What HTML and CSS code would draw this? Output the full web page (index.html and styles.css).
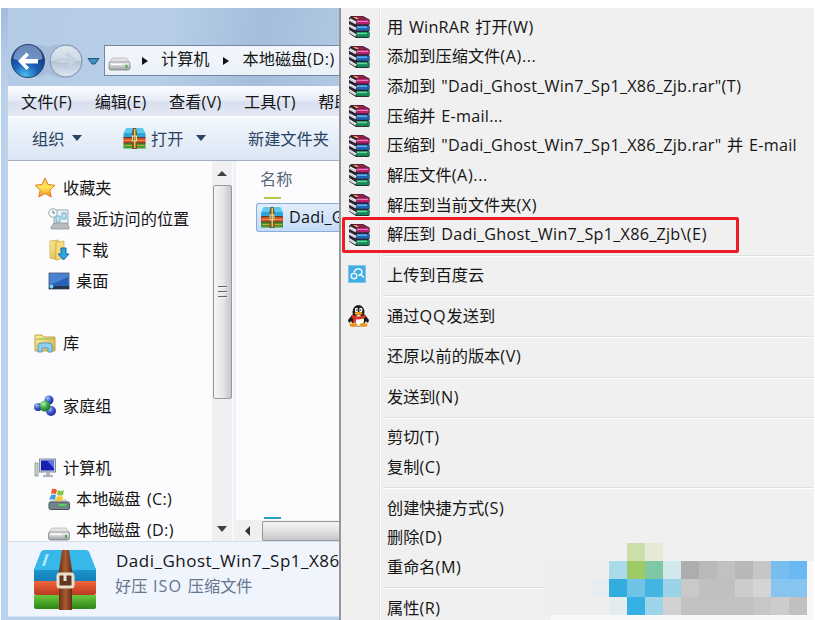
FILE: index.html
```html
<!DOCTYPE html>
<html lang="zh-CN">
<head>
    <meta charset="UTF-8">
    <meta name="viewport" content="width=device-width, initial-scale=1.0">
    <title>本地磁盘(D:)</title>
    <link rel="stylesheet" href="styles.css">
</head>
<body>
    <svg class="defs" width="0" height="0">
        <defs>
            <linearGradient id="blue" x1="0" y1="0" x2="0" y2="1">
                <stop offset="0" stop-color="#35bdec"/><stop offset="1" stop-color="#127db8"/>
            </linearGradient>
            <linearGradient id="red" x1="0" y1="0" x2="0" y2="1">
                <stop offset="0" stop-color="#f2653c"/><stop offset="1" stop-color="#b83a20"/>
            </linearGradient>
            <linearGradient id="green" x1="0" y1="0" x2="0" y2="1">
                <stop offset="0" stop-color="#6cc83c"/><stop offset="1" stop-color="#2d8517"/>
            </linearGradient>
            <linearGradient id="belt">
                <stop offset="0" stop-color="#703018"/><stop offset=".5" stop-color="#a85c30"/><stop offset="1" stop-color="#652b17"/>
            </linearGradient>
            <linearGradient id="gold" x1="0" y1="0" x2="1" y2="1">
                <stop offset="0" stop-color="#fff2a4"/><stop offset="1" stop-color="#d9ae3c"/>
            </linearGradient>
            <linearGradient id="metal" x1="0" y1="0" x2="0" y2="1">
                <stop offset="0" stop-color="#f8f8f8"/><stop offset="1" stop-color="#9a9fa1"/>
            </linearGradient>
            <linearGradient id="star" x1="0" y1="0" x2="0" y2="1">
                <stop offset="0" stop-color="#ffcb4b"/><stop offset=".5" stop-color="#ffe657"/><stop offset="1" stop-color="#f58b1f"/>
            </linearGradient>
            <radialGradient id="orb" cx=".4" cy=".95" r=".8">
                <stop offset="0" stop-color="#4fc0f5"/><stop offset=".5" stop-color="#1b5fb8"/><stop offset="1" stop-color="#16377e"/>
            </radialGradient>
            <linearGradient id="orbOff" x1="0" y1="0" x2="0" y2="1">
                <stop offset="0" stop-color="#dfe8f2"/><stop offset=".48" stop-color="#ccd8e5"/><stop offset=".5" stop-color="#b3c2d3"/><stop offset="1" stop-color="#dce7f2"/>
            </linearGradient>
            <radialGradient id="ballBlue" cx=".35" cy=".3" r=".8">
                <stop offset="0" stop-color="#aac4ff"/><stop offset=".5" stop-color="#3a55cc"/><stop offset="1" stop-color="#14238a"/>
            </radialGradient>
            <radialGradient id="ballGreen" cx=".35" cy=".3" r=".8">
                <stop offset="0" stop-color="#b4f0b0"/><stop offset=".5" stop-color="#37a548"/><stop offset="1" stop-color="#126a26"/>
            </radialGradient>
        </defs>
        <symbol id="rar" viewBox="0 0 22 22">
            <path d="M3 0h12l6.500 3.500v5L20.500 9l1 1v5l-1 .7 1 1V21l-1 1H8L1 17.500V16l1-1-1-2v-2l1-1.500-1-2V2z" fill="#2a2030"/>
            <path d="M3.500.5h11l6 3.200H9z" fill="#93204e"/>
            <path d="M5 1h3.500l2.500 1.900H8z" fill="#e3a545"/>
            <path d="M8.500 4H21.500v4.300H8.500z" fill="#b8206f"/>
            <path d="M9 4.800h11v1.200H9z" fill="#e47cb6"/>
            <path d="M8.500 9.800H21.500v4.900H8.500z" fill="#1d65b0"/>
            <path d="M9 10.500h10v1.400H9z" fill="#6bb7ea"/>
            <path d="M8.500 16H21.500v5.200H8.500z" fill="#128a56"/>
            <path d="M9 16.700h10v1.500H9z" fill="#6ad29e"/>
            <path d="M1.500 3.500L8 7M1.500 9.700L8 13.200M1.500 15.700L8 19.500" stroke="#f3f4f6" stroke-width="2.600"/>
            <path d="M1.500 3.700L8 7.300M1.500 9.900L8 13.500M1.500 15.900L8 19.800" stroke="#8b8f98" stroke-width=".5"/>
        </symbol>
        <symbol id="haozip" viewBox="0 0 64 60">
            <path d="M8 2q1-2 4-2h40q3 0 4 2l7 18v11H1V20z" fill="url(#blue)"/>
            <path d="M8 2q1-2 4-2h40q3 0 4 2l7 18H1z" fill="#36b9ea"/>
            <path d="M1 31h62v12q0 2-2 2H3q-2 0-2-2z" fill="url(#red)"/>
            <path d="M1 45h62v12q0 2-2 2H3q-2 0-2-2z" fill="url(#green)"/>
            <path d="M13 4h3l-4 12H9z" fill="#a6e6fa"/>
            <path d="M29 0h7l3 20v40H26V20z" fill="url(#belt)"/>
            <rect x="25" y="24" width="15" height="13" rx="2" fill="#60361f" stroke="#e9dfce" stroke-width="3"/>
            <path d="M32 24v7" stroke="#e9dfce" stroke-width="3"/>
        </symbol>
        <symbol id="zip" viewBox="0 0 22 21">
            <path d="M3 0h16l3 6v4H0V6z" fill="#2ca6dc"/>
            <path d="M3 0h16l3 5H0z" fill="#5cc9ee"/>
            <path d="M0 9h22v6H0z" fill="#d4512d"/>
            <path d="M0 15h22v5.500H0z" fill="#3f9c2c"/>
            <path d="M0 9.500h22M0 15h22" stroke="#5d3a20"/>
            <path d="M1 12.500h20M1 17.500h20" stroke="#f1a04d" stroke-width=".8"/>
            <path d="M9.500 0h3l1 5v16h-5V5z" fill="#7b5526"/>
            <path d="M10.500 1h1.500v19h-1.500z" fill="#e4c65b"/>
            <rect x="9" y="8" width="4" height="5" fill="none" stroke="#f0e3a8"/>
        </symbol>
        <symbol id="drive" viewBox="0 0 22 14">
            <path d="M4 1h14l3.500 5H.5z" fill="#e4e4e4" stroke="#b4b4b4" stroke-width=".7"/>
            <rect x=".5" y="5" width="21" height="8" rx="2" fill="url(#metal)" stroke="#808487" stroke-width=".8"/>
            <path d="M3 7.500h11" stroke="#fff"/>
            <rect x="17" y="8" width="2" height="3" fill="#4aa54d"/>
        </symbol>
    </svg>

    <div class="screen">
        <div class="explorer">
            <div class="address-row">
                <svg class="nav-buttons" width="92" height="40" viewBox="0 0 92 40">
                    <path d="M20 3q13 0 20 3q8-3 18-3a17 17 0 0 1 0 34q-11 0-18-4q-8 4-20 4a17 17 0 0 1 0-34z" fill="#9fb7d2" opacity=".65"/>
                    <circle cx="20" cy="20" r="16.500" fill="url(#orb)" stroke="#2c4669"/>
                    <path d="M5.500 18a14.500 14 0 0 1 29 0q-14 5-29 0z" fill="#b4cdec" opacity=".55"/>
                    <path d="M10 20l8.500-8.500 2.500 2.500-4 4H30v4.500H17l4 4-2.500 2.500z" fill="#fff"/>
                    <circle cx="58" cy="20" r="16" fill="url(#orbOff)" stroke="#8195ad"/>
                    <path d="M68 20l-8-8-2 2.500 3.500 3.500H49v4h12.500L58 25.500l2 2.500z" fill="#c6d3e1" stroke="#b3c3d5" stroke-width=".6"/>
                    <path d="M80 17.500h11l-4 5.500h-3z" fill="#3e8fc4" stroke="#23567e"/>
                </svg>
                <div class="address">
                    <svg class="address-icon" width="23" height="14"><use href="#drive"/></svg>
                    <span class="chevron"></span>
                    <span class="crumb">计算机</span>
                    <span class="chevron"></span>
                    <span class="crumb disk">本地磁盘<i>(D:)</i></span>
                </div>
            </div>
            <div class="menubar">
                <span>文件<i>(F)</i></span>
                <span>编辑<i>(E)</i></span>
                <span>查看<i>(V)</i></span>
                <span>工具<i>(T)</i></span>
                <span>帮助</span>
            </div>
            <div class="toolbar">
                <span class="tool organize">组织<b class="caret"></b></span>
                <span class="tool open"><svg width="23" height="21"><use href="#zip"/></svg>打开<b class="caret"></b></span>
                <span class="tool">新建文件夹</span>
            </div>
            <div class="content">
                <div class="tree">
                    <div class="node">
                        <svg width="22" height="22" viewBox="0 0 22 22"><path d="M11 1l3 6.500 7 .8-5.200 4.700L17.300 20 11 16.500 4.700 20l1.500-7L1 8.300l7-.8z" fill="url(#star)" stroke="#df7c2c"/></svg>
                        收藏夹
                    </div>
                    <div class="node child">
                        <svg width="22" height="22" viewBox="0 0 22 22">
                            <path d="M6 2h14v14H6z" fill="#eaf3f8" stroke="#9ba8b2"/><path d="M8 14V8h4v6zm6-9h4v6h-4z" fill="#c5e5ef" stroke="#6aacc3"/>
                            <path d="M3 19l3-4h13l2 4v2H3z" fill="#b9bdc1" stroke="#84898d" stroke-width=".7"/>
                            <circle cx="5" cy="5" r="4.300" fill="#f3f8fa" stroke="#94abb6"/><path d="M5 2.500V5h2" stroke="#568194" fill="none"/>
                        </svg>
                        最近访问的位置
                    </div>
                    <div class="node child">
                        <svg width="22" height="22" viewBox="0 0 22 22">
                            <path d="M2 2l8-1v20l-8-2z" fill="url(#gold)" stroke="#c9a53b" stroke-width=".7"/><path d="M8 3l8-1v17l-8 2z" fill="#f5dc7c" stroke="#cba943" stroke-width=".7"/>
                            <path d="M13 9h5v6h3l-5.500 6L10 15h3z" fill="#2da4e3" stroke="#1768a6"/>
                        </svg>
                        下载
                    </div>
                    <div class="node child">
                        <svg width="22" height="22" viewBox="0 0 22 22"><rect x="1" y="3" width="20" height="16" fill="#2861b9" stroke="#66788d"/><path d="M2 4h18v3L2 15z" fill="#5b9ae2" opacity=".6"/><path d="M1 16h20v3H1z" fill="#24364c"/><circle cx="3.500" cy="16.500" r="2" fill="#7bd0f0"/></svg>
                        桌面
                    </div>
                    <div class="node group">
                        <svg width="22" height="22" viewBox="0 0 22 22">
                            <path d="M1 3h7l2 2h11v14H1z" fill="url(#gold)" stroke="#bda449"/><path d="M2 7h18" stroke="#87b955"/><path d="M4 20v-6q0-3 3-3h8q3 0 3 3v6h-4v-4H8v4z" fill="#8dd1f2" stroke="#4c9cca"/>
                        </svg>
                        库
                    </div>
                    <div class="node group">
                        <svg width="22" height="22" viewBox="0 0 22 22">
                            <circle cx="15" cy="5" r="4.500" fill="url(#ballBlue)"/><circle cx="4" cy="12" r="4" fill="url(#ballBlue)"/><circle cx="17" cy="16" r="5" fill="url(#ballBlue)"/><circle cx="11" cy="11" r="5.500" fill="url(#ballGreen)"/>
                        </svg>
                        家庭组
                    </div>
                    <div class="node group">
                        <svg width="22" height="22" viewBox="0 0 22 22">
                            <path d="M1 6h3v13H1z" fill="#c6d0c6" stroke="#7d8a80" stroke-width=".7"/><rect x="5.500" y="2" width="16" height="13" fill="#cbd3df" stroke="#818b9c"/><rect x="7" y="3.500" width="13" height="10" fill="#1621b3"/><path d="M13 3.500h7v8z" fill="#5e72e5"/><path d="M12 15h4v3h3v2H9v-2h3z" fill="#abb7bc"/>
                        </svg>
                        计算机
                    </div>
                    <div class="node child">
                        <svg width="22" height="22" viewBox="0 0 22 22">
                            <path d="M3 11h15l3 4H1z" fill="#d3d6d6"/><rect x="1" y="14" width="20.500" height="7.500" rx="1.500" fill="#71858a" stroke="#465559"/><path d="M11 17h7" stroke="#4cda5c" stroke-width="2"/>
                            <path d="M4 1q3-1 5 1L8 6Q5 5 3 6z" fill="#ef5b2a"/><path d="M10 2q3 2 6 0l-1 5q-3 1-6 0z" fill="#86c542"/><path d="M3 7q3-1 5 0l-1 5q-3-2-6 0z" fill="#3f9fe0"/><path d="M9 8q3 1 6 0l-1 5q-3 1-6-1z" fill="#f8c52b"/>
                        </svg>
                        <span>本地磁盘 <i>(C:)</i></span>
                    </div>
                    <div class="node child">
                        <svg class="low" width="22" height="14"><use href="#drive"/></svg>
                        <span>本地磁盘 <i>(D:)</i></span>
                    </div>
                </div>
                <div class="vscroll">
                    <b class="arrow-up"></b>
                    <div class="vthumb"><span></span><span></span><span></span></div>
                    <b class="caret arrow-down"></b>
                </div>
                <div class="files">
                    <div class="column-name">名称</div>
                    <div class="hidden-row"></div>
                    <div class="file"><svg width="22" height="21"><use href="#zip"/></svg><span>Dadi_G</span></div>
                    <div class="next-row"></div>
                    <div class="hscroll"><b class="arrow-left"></b><div class="hthumb"></div></div>
                </div>
            </div>
            <div class="details">
                <svg width="64" height="60"><use href="#haozip"/></svg>
                <div class="details-text">
                    <div class="file-title">Dadi_Ghost_Win7_Sp1_X86</div>
                    <div class="file-type">好压 <u>ISO</u> 压缩文件</div>
                </div>
            </div>
        </div>

        <div class="context-menu">
            <div class="item"><svg width="22" height="22"><use href="#rar"/></svg><span>用 <u>WinRAR</u> 打开<i>(W)</i></span></div>
            <div class="item"><svg width="22" height="22"><use href="#rar"/></svg><span>添加到压缩文件<i>(A)...</i></span></div>
            <div class="item"><svg width="22" height="22"><use href="#rar"/></svg><span>添加到 <u>"Dadi_Ghost_Win7_Sp1_X86_Zjb.rar"</u><i>(T)</i></span></div>
            <div class="item"><svg width="22" height="22"><use href="#rar"/></svg><span>压缩并 <u>E-mail...</u></span></div>
            <div class="item"><svg width="22" height="22"><use href="#rar"/></svg><span>压缩到 <u>"Dadi_Ghost_Win7_Sp1_X86_Zjb.rar"</u> 并 <u>E-mail</u></span></div>
            <div class="item"><svg width="22" height="22"><use href="#rar"/></svg><span>解压文件<i>(A)...</i></span></div>
            <div class="item"><svg width="22" height="22"><use href="#rar"/></svg><span>解压到当前文件夹<i>(X)</i></span></div>
            <div class="item marked"><svg width="22" height="22"><use href="#rar"/></svg><span>解压到 <u>Dadi_Ghost_Win7_Sp1_X86_Zjb\</u><i>(E)</i></span></div>
            <hr>
            <div class="item">
                <svg width="22" height="22" viewBox="0 0 22 22"><rect x="0" y="1" width="18" height="18" fill="#42ace4"/><rect x=".5" y="1.500" width="17" height="17" fill="none" stroke="#7bc5e9"/><circle cx="6" cy="12" r="2.800" fill="none" stroke="#e8f6fd" stroke-width="1.500"/><path d="M6 8q2-4 5.500-3t2 5l-3 1.500M12 10l4 3.500" fill="none" stroke="#e8f6fd" stroke-width="1.500"/></svg>
                <span>上传到百度云</span>
            </div>
            <hr>
            <div class="item">
                <svg width="22" height="22" viewBox="0 0 22 22">
                    <path d="M4 10L0 15l1 3 4-3zM17 10l4 5-1 3-4-3z" fill="#1d1917"/>
                    <ellipse cx="10.500" cy="14" rx="7.500" ry="7.500" fill="#1d1917"/><ellipse cx="10.500" cy="7" rx="6" ry="7" fill="#1d1917"/>
                    <ellipse cx="10.500" cy="15.500" rx="5.500" ry="5.500" fill="#fff"/>
                    <ellipse cx="8.500" cy="5" rx="1.700" ry="2.300" fill="#fff"/><ellipse cx="12.800" cy="5" rx="1.700" ry="2.300" fill="#fff"/><circle cx="9" cy="5" r=".8"/><circle cx="12.300" cy="5" r=".8"/>
                    <ellipse cx="10.500" cy="8.500" rx="4" ry="1.400" fill="#f5a01d"/>
                    <path d="M4 9.500q6.500 4 13 0l.7 3q-5 2.500-9.700 1.800V18l-3-.5v-4l-1.700-.8z" fill="#dd3226"/>
                    <ellipse cx="5.500" cy="20" rx="4" ry="1.900" fill="#ef961f"/><ellipse cx="15.500" cy="20" rx="4" ry="1.900" fill="#ef961f"/>
                </svg>
                <span>通过<u class="qq">QQ</u>发送到</span>
            </div>
            <hr>
            <div class="item"><span>还原以前的版本<i>(V)</i></span></div>
            <hr>
            <div class="item"><span>发送到<i>(N)</i></span></div>
            <hr>
            <div class="item"><span>剪切<i>(T)</i></span></div>
            <div class="item"><span>复制<i>(C)</i></span></div>
            <hr>
            <div class="item"><span>创建快捷方式<i>(S)</i></span></div>
            <div class="item"><span>删除<i>(D)</i></span></div>
            <div class="item"><span>重命名<i>(M)</i></span></div>
            <hr>
            <div class="item"><span>属性<i>(R)</i></span></div>
        </div>

        <!-- mosaic over the lower right corner -->
        <svg class="mosaic" width="268" height="77" viewBox="0 0 268 77" shape-rendering="crispEdges">
            <path d="M0 18h62v54H0z" fill="#eeeeee"/>
            <path d="M5 72h263v5H5zM261 18h7v54h-7z" fill="#f8f8f8"/>
            <path d="M45 36h18v18H45z" fill="#e7edf0"/>
            <path d="M81 0h18v18H81z" fill="#ccdfaa"/><path d="M99 0h18v18H99z" fill="#e3ead7"/>
            <path d="M63 18h18v18H63z" fill="#aadae9"/><path d="M81 18h18v18H81z" fill="#9ccb65"/><path d="M99 18h18v18H99z" fill="#80c8a4"/><path d="M117 18h18v18h-18z" fill="#d2e8ed"/>
            <path d="M135 18h18v18h-18z" fill="#adadad"/><path d="M153 18h18v18h-18z" fill="#b9b9b9"/><path d="M171 18h18v18h-18z" fill="#c1c1c1"/><path d="M189 18h18v18h-18z" fill="#b8b8b8"/><path d="M207 18h18v18h-18z" fill="#c5c6c8"/><path d="M225 18h18v18h-18z" fill="#77bdf0"/><path d="M243 18h18v18h-18z" fill="#69b8f3"/>
            <path d="M63 36h18v18H63z" fill="#31addf"/><path d="M81 36h18v18H81z" fill="#70c3e7"/><path d="M99 36h18v18H99z" fill="#44b5e2"/><path d="M117 36h18v18h-18z" fill="#9ad2e7"/>
            <path d="M135 36h18v18h-18z" fill="#c9c9c9"/><path d="M153 36h36v18h-36z" fill="#c0c0c0"/><path d="M189 36h18v18h-18z" fill="#cccccc"/><path d="M207 36h18v18h-18z" fill="#d3d4d6"/><path d="M225 36h36v18h-36z" fill="#87c5f1"/>
            <path d="M63 54h18v18H63z" fill="#e4ecee"/><path d="M81 54h18v18H81z" fill="#34b1e2"/><path d="M99 54h18v18H99z" fill="#9dd4e9"/><path d="M117 54h18v18h-18z" fill="#d2d2d2"/>
            <path d="M135 54h72v18h-72z" fill="#c1c1c1"/><path d="M207 54h18v18h-18z" fill="#c7c7c7"/><path d="M225 54h18v18h-18z" fill="#cccccc"/><path d="M243 54h18v18h-18z" fill="#c0c0c0"/>
        </svg>
    </div>
</body>
</html>
```
FILE: styles.css
```css
*, *::after {
    box-sizing: border-box;
}
body {
    margin: 0;
    padding: 8px 1px 0;
    height: 620px;
    overflow: hidden;
    background: #fff;
    font-family: "Open Sans", "Noto Sans CJK SC", sans-serif;
    font-size: 16.2px;
    line-height: 22px;
    color: #151515;
}
i, u {
    font-style: normal;
    text-decoration: none;
}
.defs {
    position: absolute;
}
.screen {
    position: relative;
    display: flex;
    height: 612px;
}
svg {
    flex: none;
}
.explorer {
    flex: none;
    width: 338px;
    overflow: hidden;
    padding-left: 7px;
    background: linear-gradient(#a3bddb, #bad1ec 80px, #b9d2ed);
    white-space: nowrap;
}
.address-row {
    display: flex;
    align-items: center;
    height: 78px;
    padding-top: 27px;
    background: linear-gradient(100deg, #b4cbe6, #b9cfe9 45%, #a4bedb 75%, #b0c8e3);
}
.nav-buttons {
    margin-right: 4px;
}
.address {
    display: flex;
    align-items: center;
    flex: none;
    width: 260px;
    height: 31px;
    border: 1px solid #7187a3;
    background: linear-gradient(#f3f7fc, #eaf1f9);
}
.address-icon {
    margin: 6px 11px 0 3px;
}
.chevron {
    border: 4px solid transparent;
    border-left: 6px solid #111;
    border-right: 0;
}
.crumb {
    margin: -3px 13px 0;
}
.disk {
    margin-left: 14px;
}
.disk i {
    letter-spacing: 0.5px;
}
.menubar {
    display: flex;
    gap: 22.5px;
    height: 30px;
    padding: 5px 0 0 13px;
    background: linear-gradient(#fbfcfe, #e9edf8 45%, #d9dfef 55%, #e4e8f5);
}
.menubar i {
    letter-spacing: 0.3px;
}
.toolbar {
    display: flex;
    height: 45px;
    padding: 11px 0 0 24px;
    border-top: 1px solid #f9fbfe;
    border-bottom: 1px solid #a2b0c2;
    background: linear-gradient(#f4f8fd, #e6eef8 50%, #dbe6f4);
    color: #2b4262;
}
.tool {
    display: flex;
    flex: none;
}
.organize {
    width: 91px;
}
.open {
    width: 125px;
    gap: 5px;
}
.caret {
    border: 5px solid transparent;
    border-top: 6px solid #2b4262;
    border-bottom: 0;
    margin: 7px 0 0 8px;
    height: 6px;
}
.content {
    display: flex;
    height: 380px;
    background: #fcfcfe;
}
.tree {
    flex: none;
    width: 204px;
    padding-top: 11px;
    overflow: hidden;
}
.node {
    display: flex;
    align-items: center;
    height: 31.2px;
    padding-left: 26px;
    gap: 7px;
}
.child {
    padding-left: 40px;
    gap: 6px;
}
.child i {
    margin-left: 2px;
    letter-spacing: 0.3px;
}
.group {
    margin-top: 31.1px;
}
.low {
    margin-top: 8px;
}
.vscroll {
    display: flex;
    flex: none;
    flex-direction: column;
    align-items: center;
    width: 20px;
    background: #f0f0f1;
}
.arrow-up {
    margin: 10px 0 9px;
    border: 5px solid transparent;
    border-bottom: 5px solid #404040;
    border-top: 0;
}
.vthumb {
    display: flex;
    flex-direction: column;
    align-items: center;
    justify-content: center;
    gap: 3px;
    width: 19px;
    height: 214px;
    border: 1px solid #999;
    border-radius: 2px;
    background: linear-gradient(90deg, #f5f5f5, #e7e7e8 50%, #c5c6c9);
}
.vthumb span {
    width: 9px;
    height: 2px;
    background: #666;
    border-bottom: 1px solid #eee;
}
.arrow-down {
    margin: auto 0 9px;
    border-top-color: #404040;
}
.files {
    display: flex;
    flex: 1;
    flex-direction: column;
    min-width: 0;
    margin-left: 1px;
    border-left: 3px solid #edf3fa;
}
.column-name {
    padding: 7px 0 0 24px;
    color: #56657c;
}
.hidden-row {
    width: 17px;
    height: 2px;
    margin: 7px 0 4px 28px;
    background: #b0c44e;
}
.file {
    display: flex;
    align-items: center;
    gap: 6px;
    height: 29px;
    margin-left: 20px;
    padding-left: 4px;
    border: 1px solid #8aaedb;
    border-right: 0;
    border-radius: 3px 0 0 3px;
    background: linear-gradient(#e1edfc, #c4dbf8);
    overflow: hidden;
}
.file span {
    margin-top: -2px;
    letter-spacing: 0.2px;
}
.next-row {
    width: 17px;
    height: 2px;
    margin: auto 0 1px 28px;
    background: #2d9dcf;
}
.hscroll {
    display: flex;
    align-items: center;
    height: 21px;
    background: #f0f0f1;
}
.arrow-left {
    margin: 0 12px 0 9px;
    border: 5px solid transparent;
    border-right: 5px solid #333;
    border-left: 0;
}
.hthumb {
    flex: 1;
    height: 20px;
    border: 1px solid #999;
    border-right: 0;
    border-radius: 2px 0 0 2px;
    background: linear-gradient(#f4f4f4, #e2e2e3 50%, #c4c5c8);
}
.details {
    display: flex;
    height: 76px;
    padding: 8px 0 0 25px;
    border-top: 1px solid #d3dfee;
    border-bottom: 1px solid #d8e5f4;
    background: #f0f4fc;
}
.details-text {
    margin: 0 0 0 19px;
}
.file-title {
    height: 25px;
    font-size: 17px;
    letter-spacing: 0.5px;
}
.file-type {
    color: #66768e;
    margin-left: -1px;
    word-spacing: 1.5px;
}
.file-type u {
    letter-spacing: 1px;
}
.context-menu {
    flex: none;
    width: 475px;
    padding-top: 4px;
    border-left: 2px solid #979797;
    background: linear-gradient(90deg, transparent 38px, #e2e3e3 38px, #e2e3e3 39px, #fafafa 39px, #fafafa 40px, transparent 40px) #f0f0f0;
    overflow: hidden;
}
.item {
    display: flex;
    align-items: center;
    height: 29.7px;
    padding-left: 7px;
    white-space: pre;
    word-spacing: 1.5px;
}
.item span {
    margin: -0.4px 0 0 17px;
}
.item > span:first-child {
    margin-left: 39px;
}
.item i {
    letter-spacing: 0.6px;
}
.item u {
    letter-spacing: 0.25px;
}
.item .qq {
    letter-spacing: 1px;
}
/* red frame round the highlighted entry */
.marked {
    position: relative;
}
.marked::after {
    content: "";
    position: absolute;
    left: 1px;
    top: -3px;
    width: 397px;
    height: 36px;
    border: 3px solid #ee1c25;
    border-radius: 2px;
}
hr {
    height: 2px;
    margin: 5.4px 0 3.5px 42px;
    border: 0;
    border-top: 1px solid #dfdfdf;
    border-bottom: 1px solid #fff;
}
.mosaic {
    position: absolute;
    left: 545px;
    top: 535px;
}
```
